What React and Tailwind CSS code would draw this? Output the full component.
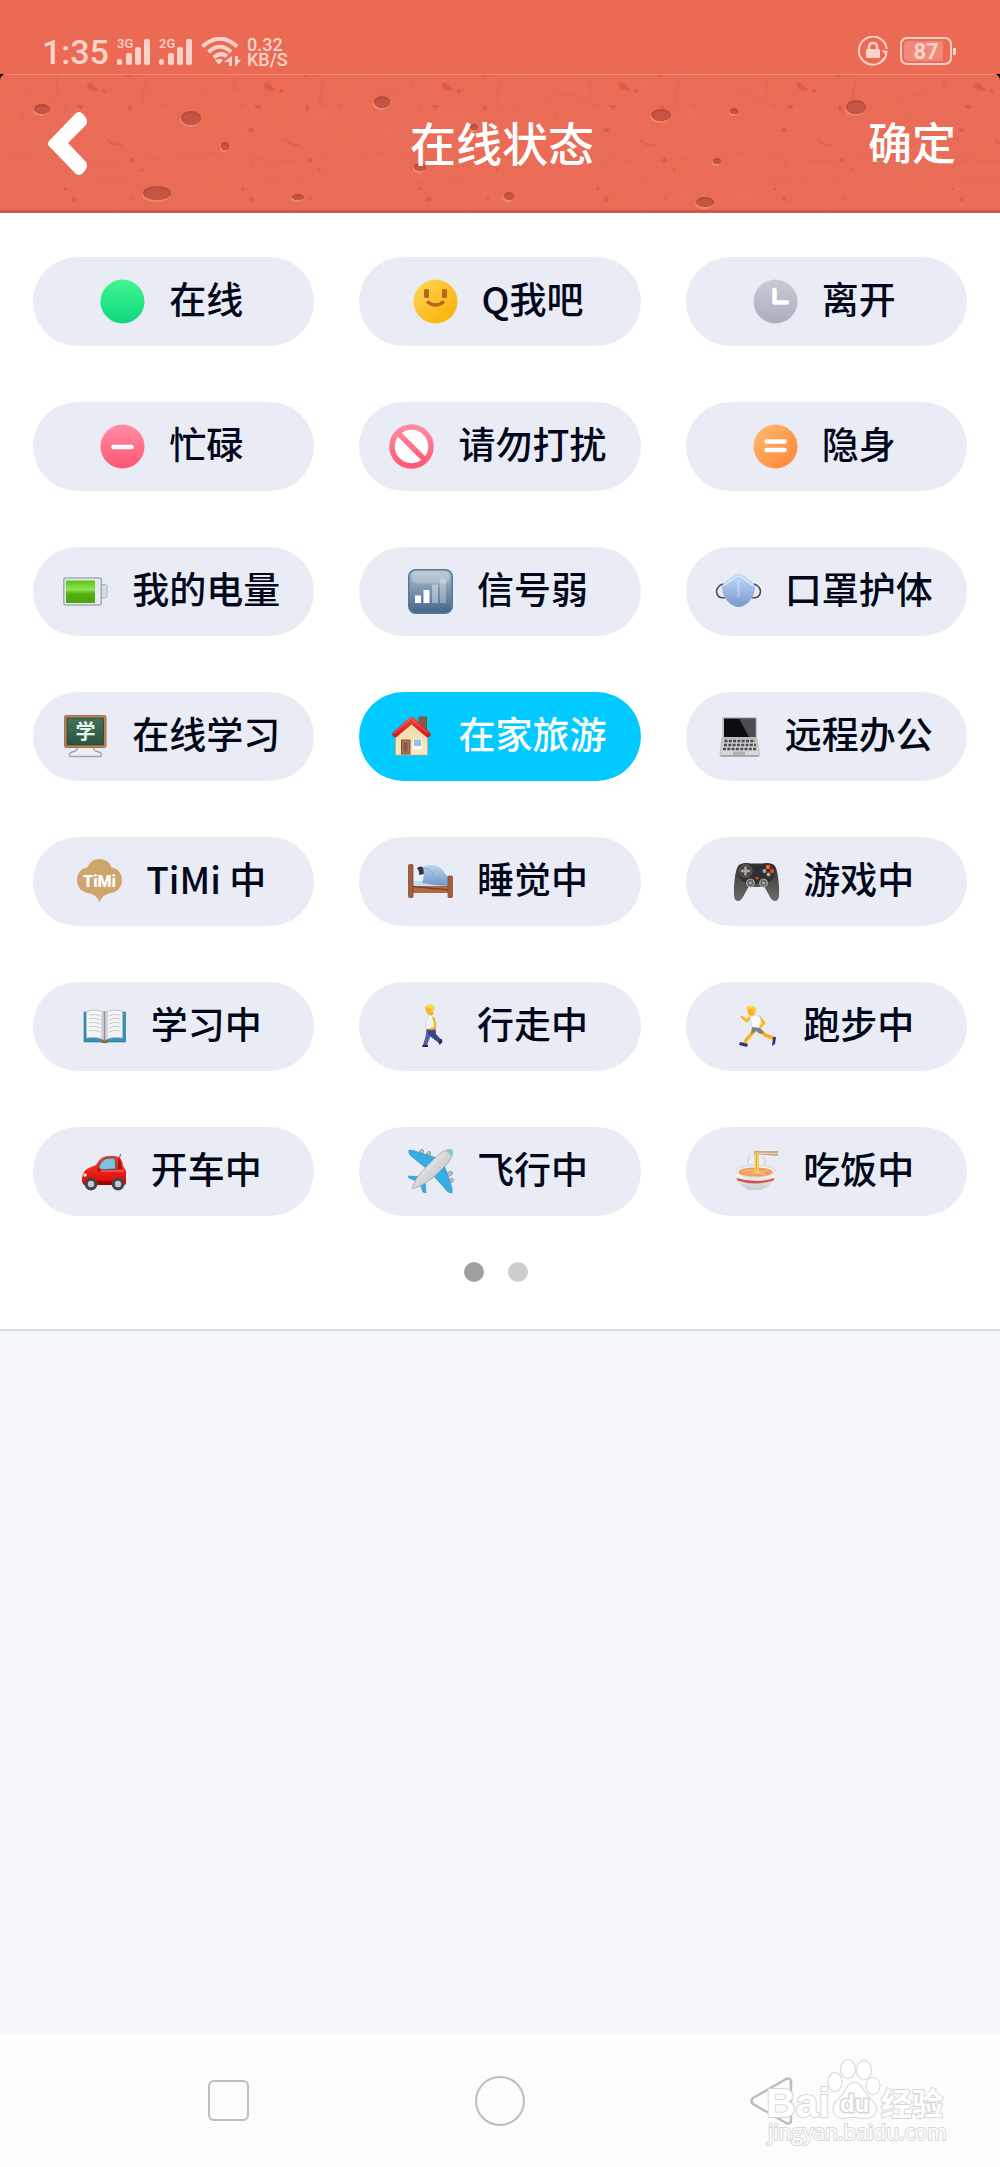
import React, { useState } from 'react';

const SKIN_PITS = [
  [42, 35, 8, 5], [191, 44, 10, 7], [225, 72, 4, 4], [157, 119, 14, 7], [298, 123, 6, 3],
  [382, 28, 8, 6], [420, 93, 6, 4], [474, 53, 4, 3], [509, 122, 5, 4], [661, 41, 10, 6],
  [734, 37, 4, 3], [856, 33, 10, 7], [717, 87, 4, 3], [705, 128, 9, 5],
];

function HeaderSkin() {
  return (
    <svg className="absolute inset-0 h-full w-full" viewBox="0 0 1000 139" preserveAspectRatio="xMidYMid slice" aria-hidden="true">
      <defs>
        <filter id="skinGrain" x="0" y="0" width="100%" height="100%">
          <feTurbulence type="fractalNoise" baseFrequency="0.03 0.06" numOctaves="3" seed="4" />
          <feColorMatrix values="0 0 0 0 0.75  0 0 0 0 0.28  0 0 0 0 0.2  0 0 0 1.6 -0.7" />
        </filter>
        <pattern id="skinFlecks" width="177.5" height="139" patternUnits="userSpaceOnUse">
          <g fill="#d9503c" opacity="0.6">
            <path d="M87 9q5-1 7 3l5 4-4 1-5-1q-4-2-3-7z" />
            <path d="M76 31h8l-3 5z" />
            <path d="M62 32l6-1-3 2z" />
            <path d="M124 2l6-2h14l-3 2-8-1-4 2z" />
            <ellipse cx="130" cy="34" rx="2" ry="3" />
            <ellipse cx="104" cy="17" rx="2" ry="2" />
            <ellipse cx="74" cy="56" rx="3" ry="2" />
            <ellipse cx="132" cy="86" rx="2" ry="2.5" />
            <ellipse cx="74" cy="125" rx="2.2" ry="2.5" />
            <ellipse cx="133" cy="124" rx="1.5" ry="1.2" />
            <ellipse cx="65" cy="115" rx="1.5" ry="1.5" />
            <ellipse cx="142" cy="96" rx="1.5" ry="1.5" />
            <ellipse cx="162" cy="32" rx="1.2" ry="1" />
            <ellipse cx="23" cy="41" rx="1.2" ry="1" />
            <ellipse cx="75" cy="88" rx="1" ry="1" />
            <ellipse cx="115" cy="136" rx="1.5" ry="1" />
          </g>
          <g fill="none" stroke="#cf5543" strokeLinecap="round">
            <path d="M57 4v12M146 8q-5 14-2 24" strokeWidth="3" opacity="0.18" />
            <path d="M108 66q4 5 13 5" strokeWidth="2.5" opacity="0.4" />
            <path d="M0 82q40-6 76 2t90-2M10 24q30-8 48 4M60 110q40-10 70-2" strokeWidth="1.5" opacity="0.12" />
          </g>
        </pattern>
      </defs>
      <rect width="1000" height="139" fill="#ea6c57" />
      <rect width="1000" height="139" filter="url(#skinGrain)" opacity="0.2" />
      <rect width="1000" height="139" fill="url(#skinFlecks)" />
      {SKIN_PITS.map(([cx, cy, rx, ry]) => (
        <g key={`${cx}-${cy}`}>
          <ellipse cx={cx - 1} cy={cy + 2} rx={rx} ry={ry} fill="#f08672" />
          <ellipse cx={cx} cy={cy} rx={rx} ry={ry} fill="#b84a39" />
          <ellipse cx={cx} cy={cy + 1} rx={rx - 1} ry={ry - 1} fill="#c65443" />
        </g>
      ))}
      <rect width="1000" height="1" fill="#f18a76" />
      <rect y="136" width="1000" height="3" fill="#c95d4b" />
    </svg>
  );
}

function Signal({ label }) {
  return (
    <svg className="h-7 w-[34px] overflow-visible" viewBox="0 0 34 28" fill="currentColor">
      <text x="0" y="10" fontSize="13" fontWeight="500" fontFamily="Roboto, sans-serif">{label}</text>
      <rect x="0" y="21" width="5" height="6" rx="2" />
      <rect x="9" y="15" width="6" height="12" rx="2" />
      <rect x="18" y="9" width="6" height="18" rx="2" />
      <rect x="27" y="1" width="6" height="26" rx="2" />
    </svg>
  );
}

function Wifi() {
  return (
    <svg className="h-[30px] w-10" viewBox="0 0 40 30" fill="none" stroke="currentColor" strokeWidth="4">
      <path d="M1.500 9.500Q19-6 36 9.500" />
      <path d="M7.500 15Q19 4.500 30 15" />
      <path d="M13 20.500Q19 14.500 26 19" />
      <path d="M14 23.500q5-3.500 8 0l-4 4z" fill="currentColor" stroke="none" />
      <path d="M31 19v10h-3v-4h-5zM34 19v11l6-7h-3v-4z" fill="currentColor" stroke="none" />
    </svg>
  );
}

function StatusBar() {
  return (
    <div className="flex h-[74px] items-end justify-between bg-[#eb6a53] pr-11 pb-1.5 pl-[42px] font-[Roboto,sans-serif] text-[#fbd2ca]">
      <div className="flex items-center">
        <span className="text-[34px] leading-8 font-medium">1:35</span>
        <div className="ml-2 flex gap-2">
          <Signal label="3G" />
          <Signal label="2G" />
        </div>
        <div className="ml-2"><Wifi /></div>
        <div className="ml-1.5 flex flex-col text-lg leading-[15px] font-medium">
          <span>0.32</span>
          <span>KB/S</span>
        </div>
      </div>
      <div className="flex items-center gap-3 pb-0.5">
        <svg className="h-[30px] w-[30px]" viewBox="0 0 30 30" fill="none" stroke="currentColor" strokeWidth="2">
          <path d="M28.500 18A14 14 0 1 1 28.800 13M26 22A14 14 0 0 1 22 27" />
          <path d="M24 14l6 1-2 5z" fill="currentColor" stroke="none" />
          <rect x="8" y="13" width="14" height="9" rx="1" fill="currentColor" stroke="none" />
          <path d="M11 14v-3q0-4 4-4t4 4v3" strokeWidth="2.500" />
        </svg>
        <svg className="h-7 w-14" viewBox="0 0 56 28">
          <rect x="1" y="1" width="50" height="26" rx="6" fill="none" stroke="currentColor" strokeWidth="2" />
          <path d="M8 4h35v20H8q-4 0-4-4V8q0-4 4-4z" fill="currentColor" opacity="0.3" />
          <rect x="53" y="11" width="3" height="7" rx="1" fill="currentColor" />
          <text x="26" y="22" textAnchor="middle" fontSize="22" fontWeight="700" fontFamily="Roboto, sans-serif" fill="currentColor">87</text>
        </svg>
      </div>
    </div>
  );
}

function Grad({ id, from, to, diagonal }) {
  return (
    <linearGradient id={id} x1="0" y1="0" x2={diagonal ? '1' : '0'} y2="1">
      <stop offset="0" stopColor={from} />
      <stop offset="1" stopColor={to} />
    </linearGradient>
  );
}

const ICONS = {
  online: (
    <>
      <Grad id="gOnline" from="#42f590" to="#0cd87c" />
      <circle cx="22.500" cy="22.500" r="22" fill="url(#gOnline)" />
    </>
  ),
  smile: (
    <>
      <Grad id="gSmile" from="#fcd757" to="#fbae00" diagonal />
      <circle cx="22.500" cy="22.500" r="22" fill="url(#gSmile)" />
      <rect x="11" y="10" width="5" height="9" rx="1.500" fill="#b9651c" />
      <rect x="29" y="10" width="5" height="9" rx="1.500" fill="#b9651c" />
      <path d="M14 22.500q8.500 7 17 0" fill="none" stroke="#b9651c" strokeWidth="3.200" />
    </>
  ),
  away: (
    <>
      <Grad id="gAway" from="#c8cad6" to="#adafbd" />
      <circle cx="22.500" cy="22.500" r="22" fill="url(#gAway)" />
      <path d="M21.500 11v12.500h12.500" fill="none" stroke="#fff" strokeWidth="4.500" strokeLinecap="round" strokeLinejoin="round" />
    </>
  ),
  busy: (
    <>
      <Grad id="gBusy" from="#ff8da2" to="#ff5574" />
      <circle cx="22.500" cy="22.500" r="22" fill="url(#gBusy)" />
      <path d="M13.500 23h18" stroke="#fff" strokeWidth="4.500" strokeLinecap="round" />
    </>
  ),
  dnd: (
    <>
      <linearGradient id="gDnd" gradientUnits="userSpaceOnUse" x1="0" y1="0" x2="0" y2="45">
        <stop offset="0" stopColor="#ff8fa4" />
        <stop offset="1" stopColor="#ff5473" />
      </linearGradient>
      <circle cx="22.500" cy="22.500" r="19.500" fill="#fff" stroke="url(#gDnd)" strokeWidth="5.500" />
      <path d="M9 9l27 27" stroke="url(#gDnd)" strokeWidth="5.500" />
    </>
  ),
  invisible: (
    <>
      <Grad id="gInv" from="#ffbb70" to="#ff8336" diagonal />
      <circle cx="22.500" cy="22.500" r="22" fill="url(#gInv)" />
      <path d="M13.500 17.500h18M13.500 26h18" stroke="#fff" strokeWidth="4.500" strokeLinecap="round" />
    </>
  ),
  battery: (
    <>
      <linearGradient id="gBat" x1="0" y1="0" x2="0" y2="1">
        <stop offset="0" stopColor="#5fc015" />
        <stop offset="0.4" stopColor="#8be650" />
        <stop offset="0.6" stopColor="#52ad0d" />
        <stop offset="1" stopColor="#4da60c" />
      </linearGradient>
      <rect x="37" y="15.500" width="7" height="13.500" rx="2" fill="#d3dee4" stroke="#aab6be" />
      <rect x="0.800" y="9" width="37.500" height="27" rx="2" fill="#e2ebf2" stroke="#a3acb5" strokeWidth="1.600" />
      <rect x="3" y="11.500" width="29" height="22.500" fill="url(#gBat)" />
    </>
  ),
  signal: (
    <>
      <Grad id="gSig" from="#b2c2cf" to="#426587" />
      <rect x="0.800" y="0.800" width="43.400" height="43.400" rx="7" fill="url(#gSig)" stroke="#56799a" strokeWidth="1.600" />
      <rect x="4" y="2.500" width="37" height="12" rx="5" fill="#fff" opacity="0.22" />
      <rect x="7" y="26.500" width="6" height="7.500" fill="#fff" />
      <rect x="15.500" y="21" width="6" height="13" fill="#fff" />
      <rect x="24" y="15.500" width="6" height="18.500" fill="#fff" opacity="0.4" />
      <rect x="32" y="10" width="6" height="24" fill="#fff" opacity="0.3" />
    </>
  ),
  mask: (
    <>
      <Grad id="gMask" from="#c4dbfb" to="#7b98cf" />
      <g fill="none" stroke="#4a4a4c" strokeWidth="1.600">
        <path d="M7 15q-6 2-6.500 7.500Q1 30 9.500 28.500" />
        <path d="M38 15q6 2 6.500 7.500Q44 30 35.500 28.500" />
      </g>
      <path d="M22.500 4.500Q25 4.500 28 7l8 6q3 2 3 5 0 13-12 19-4.500 2-9 0Q6 31 6 18q0-3 3-5l8-6q3-2.500 5.500-2.500z" fill="url(#gMask)" />
      <path d="M22.500 10v18" stroke="#dbe7fb" strokeWidth="3" opacity="0.35" />
      <path d="M7.500 17q9-8 15-10 6 2 15 10" fill="none" stroke="#dceafe" strokeWidth="1.500" />
    </>
  ),
  board: (
    <>
      <Grad id="gBoard" from="#44725a" to="#2b5341" />
      <path d="M14 32v3q0 2-3 2.500-5 1-4.500 4 0 1 2 1h28q2 0 2-1 .5-3-4.500-4-3-.5-3-2.500v-3z" fill="#eceff1" stroke="#9fa4a7" strokeWidth="1.400" />
      <rect x="1.500" y="1.500" width="41.500" height="32" rx="1.500" fill="#bd8556" stroke="#aa704a" />
      <rect x="4" y="4" width="36.500" height="27" fill="url(#gBoard)" stroke="#244638" strokeWidth="0.800" />
      <text x="22.500" y="25" textAnchor="middle" fontSize="20" fontWeight="700" fontFamily="'Noto Sans CJK SC', sans-serif" fill="#e9f6f0">学</text>
    </>
  ),
  house: (
    <>
      <Grad id="gWall" from="#e8d9a5" to="#fdeac2" />
      <Grad id="gRoof" from="#f0443e" to="#c9191c" />
      <rect x="30" y="3" width="7.500" height="15" fill="#955342" stroke="#7d463b" strokeWidth="0.800" />
      <path d="M6.500 20L22 8l16.500 12v21h-32z" fill="url(#gWall)" stroke="#bfae8a" strokeWidth="0.800" />
      <path d="M20 4q2-2 5 0l16.500 15q1 4-3.500 4.500L22.500 10.500 7 23.500Q2.500 23 3.500 19z" fill="url(#gRoof)" />
      <path d="M5 19.500L22 4.500l17 15" fill="none" stroke="#ff837a" strokeWidth="1" opacity="0.6" />
      <rect x="12.500" y="26" width="8.500" height="14" fill="#a8735e" stroke="#85513e" />
      <rect x="14.500" y="28.500" width="4" height="9" fill="#8c5848" />
      <rect x="24.500" y="25" width="8" height="8" fill="#8dc0ec" stroke="#fff6de" />
      <rect x="24" y="32" width="9.500" height="3" fill="#fff" />
    </>
  ),
  laptop: (
    <>
      <Grad id="gDeck" from="#c4c5c7" to="#dcdcdd" />
      <rect x="6" y="3" width="35" height="22" rx="1" fill="#c2c3c5" />
      <rect x="8" y="4.500" width="31.500" height="18.500" fill="#0d0d0f" />
      <path d="M23 4.500h16.500V23H33z" fill="#6d6f73" opacity="0.65" />
      <path d="M6 24h35l2.500 17q0 1.500-1.500 1.500H5.500Q4 42.500 4 41z" fill="url(#gDeck)" stroke="#a9aaac" strokeWidth="0.600" />
      <g stroke="#4b4c50" strokeWidth="2.300" strokeDasharray="3 1.300">
        <path d="M8.500 27h30.500" />
        <path d="M8 31h32" />
        <path d="M7 35h34" />
      </g>
      <rect x="17" y="37.500" width="12" height="3.500" fill="#b0b1b4" />
      <path d="M4.500 41.800h38" stroke="#8c8d90" />
    </>
  ),
  timi: (
    <>
      <path d="M22.500 0C29 0 33 4 34.500 8.500 41 9 45 15 45 21c0 8-5.500 12-11 13-6.500 1.500-9.500 4-11.500 9.500C20.500 38 17.500 35.500 11 34 5.500 33 0 29 0 21 0 15 4 9 10.500 8.500 12 4 16 0 22.500 0z" fill="#cda56d" />
      <text x="22.500" y="28" textAnchor="middle" fontSize="16" fontWeight="900" fontFamily="Roboto, sans-serif" fill="#fff">TiMi</text>
    </>
  ),
  bed: (
    <>
      <Grad id="gQuilt" from="#bdd5f1" to="#6d97c5" />
      <path d="M3 20h38v8H3z" fill="#c5ddf1" />
      <path d="M5 17q5-3 10-1v6H5z" fill="#e9f2fb" />
      <path d="M9 9q4-3 7 0v6l-5 1q1-3-2-7z" fill="#33363b" />
      <path d="M15 8q4-2 9-2 10 1 14 10l4 2v9q-14 0-28-3 3-6 1-16z" fill="url(#gQuilt)" />
      <path d="M16 9q9 1 11 12M16 22q10-3 24 3" fill="none" stroke="#82a8d2" strokeWidth="1" />
      <path d="M3 27h39v7H3z" fill="#b36a43" />
      <path d="M4 27.500L42 31" stroke="#7d4227" strokeWidth="1.500" />
      <rect x="0.500" y="5.500" width="4.500" height="33" rx="1" fill="#a65d3a" stroke="#7e4228" strokeWidth="0.700" />
      <rect x="40" y="17" width="4.500" height="21.500" rx="1" fill="#a65d3a" stroke="#7e4228" strokeWidth="0.700" />
    </>
  ),
  gamepad: (
    <>
      <Grad id="gPad" from="#303133" to="#6c6d68" />
      <path d="M9 4.500h27q5 0 6.500 6Q45.500 22 45 37q-.5 5-4 5-3 0-5-4l-5.500-10H14.500L9 38q-2 4-5 4-3.500 0-4-5Q-.5 22 2.500 10.500 4 4.500 9 4.500z" fill="url(#gPad)" />
      <path d="M8 5q7-3 10 2h9q3-5 10-2 6 4 3 13-4 7-10 5-7 4-15 0-6 2-10-5Q2 9 8 5z" fill="#2f3031" />
      <circle cx="11.500" cy="12" r="6.500" fill="#454648" stroke="#8c5137" />
      <path d="M11.500 7.500v9M7 12h9" stroke="#a5a7aa" strokeWidth="2.500" />
      <circle cx="34" cy="8" r="2.200" fill="#ff6a1b" />
      <circle cx="38" cy="12" r="2.200" fill="#f04911" />
      <circle cx="30.500" cy="12" r="2" fill="#a7a9aa" />
      <circle cx="34.500" cy="15.500" r="2" fill="#a7a9aa" />
      <circle cx="16.500" cy="24" r="4" fill="#6b6c6d" stroke="#a9aaab" />
      <circle cx="29.500" cy="24" r="4" fill="#6b6c6d" stroke="#a9aaab" />
      <path d="M15 24h3M28 24h3" stroke="#ddd" />
      <circle cx="23" cy="19" r="1.500" fill="#d4461b" />
    </>
  ),
  book: (
    <>
      <path d="M2 8h41.500v30h-17q-4 2-8 0H2z" fill="#348fb9" stroke="#286f92" strokeWidth="0.600" />
      <path d="M19 35h8v3q-4 2-8 0z" fill="#826f3a" />
      <path d="M4.500 7.500Q15 4 22.500 9q8-5 18-1.500V34q-10-2-18 2-7.500-4-18-2z" fill="#f4f4f7" stroke="#b7bac2" strokeWidth="0.800" />
      <path d="M22.500 9v27" stroke="#8e9198" strokeWidth="2" />
      <path d="M20 9v25M25 9v25" stroke="#d2d4da" strokeWidth="2" />
      <path d="M7 11q6-2 11 1M7 15q6-2 11 1M7 19q6-2 11 1M7 23q6-2 11 1M7 27q6-2 11 1M27 12q5-3 11-1M27 16q5-3 11-1M27 20q5-3 11-1M27 24q5-3 11-1M27 28q5-3 11-1" fill="none" stroke="#c3c5cc" strokeWidth="0.900" />
    </>
  ),
  walk: (
    <>
      <path d="M18.500 24l-.5 7-3 10h4l4.500-11 1-6z" fill="#5560a6" />
      <path d="M19 24h8.500l.5 6 5.500 6-2.500 3-8-6-4-5z" fill="#3f4688" />
      <path d="M20 11q4-.5 5.500 3 1.500 4 2 11h-9.500q-1-8 2-14z" fill="#f4f4f6" stroke="#c9cad2" strokeWidth="0.700" />
      <path d="M25.500 14q2 5 1.500 10l-5 1" fill="none" stroke="#f0b41f" strokeWidth="2.200" strokeLinecap="round" />
      <path d="M20 7h5v4h-3z" fill="#e79f20" />
      <path d="M17 3h8q1.500 4-1 6.500-2.500 1.500-5.500 0z" fill="#f9b92c" />
      <path d="M16.500 3Q18 0 22 .5q4-.5 4.500 3.500 0 2-1.500 4l-2-3.500z" fill="#ffd63f" />
      <path d="M15 40.500l5 .5v2h-6zM30.500 38l3-3.500 1 3.500-3 3z" fill="#262a47" />
    </>
  ),
  run: (
    <>
      <path d="M20 27l-7 8-3 5M26 26l5 5 8 3" fill="none" stroke="#f5b11c" strokeWidth="3.500" strokeLinecap="round" strokeLinejoin="round" />
      <path d="M17 12l-4 5-5-4M25 13l5 6-5 5" fill="none" stroke="#f8b91d" strokeWidth="2.800" strokeLinecap="round" strokeLinejoin="round" />
      <path d="M16 12q6-2 10 1l1 4-2 8h-7z" fill="#fafafb" stroke="#d1d2d7" strokeWidth="0.600" />
      <path d="M18 23l8 1 4 5-4 1-4-3-5 3z" fill="#7e8088" />
      <path d="M13 3q5-2 9 1 1 4-2 7-4 2-6-1z" fill="#f8b522" />
      <path d="M12 3q5-2 9 0 2 3 0 6l-3-4-6-.500z" fill="#ffd53b" />
      <path d="M6 38l8 2-1 3-8-2zM39 33l3 0-1 7-3 2z" fill="#2a3588" />
    </>
  ),
  car: (
    <>
      <Grad id="gCar" from="#ff3c32" to="#d80705" />
      <path d="M37 9l2-4" stroke="#555" />
      <path d="M0 30q0-8 7-11l7-3q4-8 11-9 9-1 13 2 2 1 3 8l3 5v13q0 1-3 1H3q-3 0-3-6z" fill="url(#gCar)" />
      <path d="M17 17q3-7 9-8h7l1 11-17 1z" fill="#7fc2d9" stroke="#3f5862" strokeWidth="1" />
      <path d="M36 9q3 0 4 11h-4z" fill="#b4120d" />
      <path d="M15 22h27" stroke="#ff7a6e" strokeWidth="1" />
      <path d="M15 32h16v4H15z" fill="#a10000" />
      <circle cx="9" cy="35" r="6.500" fill="#434548" />
      <circle cx="9" cy="35" r="3.200" fill="#c6c8ca" />
      <circle cx="36" cy="35" r="6.500" fill="#434548" />
      <circle cx="36" cy="35" r="3.200" fill="#c6c8ca" />
      <circle cx="3" cy="26" r="1.800" fill="#ffd9d2" />
      <circle cx="17" cy="21" r="2" fill="#c50b08" />
    </>
  ),
  plane: (
    <>
      <Grad id="gBody" from="#ffffff" to="#aeb1b5" diagonal />
      <g fill="#b7babd" stroke="#8e9194" strokeWidth="0.600">
        <ellipse cx="13" cy="4" rx="2.200" ry="4" transform="rotate(25 13 4)" />
        <ellipse cx="20" cy="6" rx="2.200" ry="4" transform="rotate(25 20 6)" />
        <ellipse cx="41" cy="25" rx="4" ry="2.200" transform="rotate(-25 41 25)" />
        <ellipse cx="42" cy="32" rx="4" ry="2.200" transform="rotate(-25 42 32)" />
      </g>
      <path d="M1 1l4 .5L32 10 19 20 2 6Q0 3 1 1z" fill="#36aee5" stroke="#2488b8" strokeWidth="0.600" />
      <path d="M44 44l-4-1L25 26 35 13l9 26z" fill="#36aee5" stroke="#2488b8" strokeWidth="0.600" />
      <path d="M0 27l14 1-3 5-10-4zM18 44l-1-12-5 3 3 8z" fill="#36aee5" stroke="#2488b8" strokeWidth="0.600" />
      <path d="M44 1q2 5-4 13L25 29Q14 37 5 40l-1-1q3-10 12-19L31 5q8-6 13-4z" fill="url(#gBody)" stroke="#94979a" strokeWidth="0.600" />
      <path d="M37 2q5-2 7-1 1 3-1 7-2-5-6-6z" fill="#7cc6e9" />
    </>
  ),
  noodles: (
    <>
      <Grad id="gBowl" from="#ffffff" to="#c9cacc" />
      <path d="M15 15q-3-4 1-8M30 16q3-4-1-8" fill="none" stroke="#d4d6db" strokeWidth="1.500" />
      <path d="M1.500 22q0 14 14 19h11q15-5 15-19z" fill="url(#gBowl)" />
      <ellipse cx="21.500" cy="22" rx="20" ry="6" fill="#eeeeef" stroke="#d0d1d3" strokeWidth="0.800" />
      <ellipse cx="21.500" cy="23" rx="17" ry="4.500" fill="#f19c57" />
      <path d="M8 23q8-3 14-1t12-1M11 25q10-2 20 0" fill="none" stroke="#f7c181" strokeWidth="1.300" />
      <path d="M2.500 29q19 6 38 0l-1 2.500q-18 6-36 0z" fill="#da4d4b" />
      <path d="M20 4h5v20h-4z" fill="#f5d45d" />
      <path d="M22.500 5v18" stroke="#dfae31" />
      <path d="M20 2h24v5l-24-2z" fill="#c9a77e" />
      <path d="M21 4l23 .500" stroke="#ead9bd" />
    </>
  ),
};

const STATUSES = [
  { id: 'online', label: '在线' },
  { id: 'smile', label: 'Q我吧' },
  { id: 'away', label: '离开' },
  { id: 'busy', label: '忙碌' },
  { id: 'dnd', label: '请勿打扰' },
  { id: 'invisible', label: '隐身' },
  { id: 'battery', label: '我的电量' },
  { id: 'signal', label: '信号弱' },
  { id: 'mask', label: '口罩护体' },
  { id: 'board', label: '在线学习' },
  { id: 'house', label: '在家旅游' },
  { id: 'laptop', label: '远程办公' },
  { id: 'timi', label: 'TiMi 中' },
  { id: 'bed', label: '睡觉中' },
  { id: 'gamepad', label: '游戏中' },
  { id: 'book', label: '学习中' },
  { id: 'walk', label: '行走中' },
  { id: 'run', label: '跑步中' },
  { id: 'car', label: '开车中' },
  { id: 'plane', label: '飞行中' },
  { id: 'noodles', label: '吃饭中' },
];

function StatusPill({ status, active, onSelect }) {
  return (
    <button
      type="button"
      aria-pressed={active}
      onClick={() => onSelect(status.id)}
      className={`flex h-[89px] items-center justify-center gap-6 rounded-full pr-1 text-[37px] leading-none font-medium whitespace-nowrap ${active ? 'bg-[#00caff] text-white' : 'bg-[#e9ecf5] text-[#03081a]'}`}
    >
      <svg className="h-[45px] w-[45px] shrink-0 overflow-visible" viewBox="0 0 45 45" aria-hidden="true">
        {ICONS[status.id]}
      </svg>
      <span className="pb-1.5">{status.label}</span>
    </button>
  );
}

function Watermark() {
  return (
    <svg className="pointer-events-none absolute top-6 right-[53px] h-[92px] w-[182px] overflow-visible" viewBox="0 0 182 92" fill="#fff" stroke="#d6d6d6" strokeWidth="2" paintOrder="stroke">
      <ellipse cx="70" cy="24" rx="6.500" ry="9" />
      <ellipse cx="83" cy="11" rx="7" ry="9" />
      <ellipse cx="99" cy="12" rx="7" ry="9" />
      <ellipse cx="108" cy="28" rx="6.500" ry="8" />
      <path d="M89 25q6 0 9 7 3 5 8 10 8 8 4 13-4 6-11 5-10-2-20 0-8 0-10-6-2-7 5-13 5-4 7-9 3-7 8-7z" />
      <g fontFamily="'Liberation Sans', sans-serif" fontWeight="700">
        <text x="1" y="59" fontSize="41">Bai</text>
        <text x="75" y="54" fontSize="24" strokeWidth="3">du</text>
        <text x="116" y="57" fontSize="31" fontFamily="'Noto Sans CJK SC', sans-serif">经验</text>
      </g>
      <text x="3" y="82" fontSize="21" fontFamily="'Open Sans', sans-serif">jingyan.baidu.com</text>
    </svg>
  );
}

function NavBar() {
  return (
    <nav className="relative flex h-[133px] items-center justify-center gap-[222px] bg-[#fcfcfc] text-[#bdbdbd]">
      <button type="button" aria-label="最近任务" className="flex w-[50px] justify-center">
        <span className="h-[41px] w-[41px] rounded-md border-2 border-current" />
      </button>
      <button type="button" aria-label="主页" className="h-[50px] w-[50px] rounded-full border-2 border-current" />
      <button type="button" aria-label="返回" className="flex w-[50px] justify-center">
        <svg className="h-[50px] w-11" viewBox="0 0 44 50" fill="none" stroke="currentColor" strokeWidth="2.500" strokeLinejoin="round">
          <path d="M3 22L36 3q5-2 5 3v38q0 5-5 3L3 28q-3-3 0-6z" />
        </svg>
      </button>
      <Watermark />
    </nav>
  );
}

export default function App() {
  const [selected, setSelected] = useState('house');
  const [page, setPage] = useState(0);

  return (
    <div className="flex min-h-screen flex-col bg-[#f5f6fa] font-['Noto_Sans_CJK_SC',sans-serif]">
      <StatusBar />
      <div className="bg-black">
        <header className="relative grid h-[139px] grid-cols-3 items-center overflow-hidden rounded-t-[6px] pr-11 pl-12 text-white">
          <HeaderSkin />
          <button type="button" aria-label="返回" className="relative justify-self-start">
            <svg className="h-[66px] w-10" viewBox="0 0 40 66" fill="currentColor">
              <path d="M1 30L27 3q4-4 8 0l3 4q2 4 0 7L20 32l18 19q2 3 0 7l-3 4q-4 4-8 0L1 35q-2-2 0-5z" />
            </svg>
          </button>
          <h1 className="relative pb-1.5 text-center text-[46px] leading-none font-medium">在线状态</h1>
          <button type="button" className="relative justify-self-end pb-1.5 text-[44px] leading-none font-medium">确定</button>
        </header>
      </div>
      <main className="border-b-2 border-[#d0dfe1] bg-white px-[33px] pt-11 pb-[47px]">
        <div className="grid grid-cols-3 gap-x-[45px] gap-y-14">
          {STATUSES.map(s => (
            <StatusPill key={s.id} status={s} active={selected === s.id} onSelect={setSelected} />
          ))}
        </div>
        <div className="mt-[46px] flex justify-center gap-6 pr-2">
          {[0, 1].map(i => (
            <button
              key={i}
              type="button"
              aria-label={`第${i + 1}页`}
              onClick={() => setPage(i)}
              className={`h-5 w-5 rounded-full ${page === i ? 'bg-[#a0a0a0]' : 'bg-[#cdcdcd]'}`}
            />
          ))}
        </div>
      </main>
      <div className="flex-1" />
      <NavBar />
    </div>
  );
}
